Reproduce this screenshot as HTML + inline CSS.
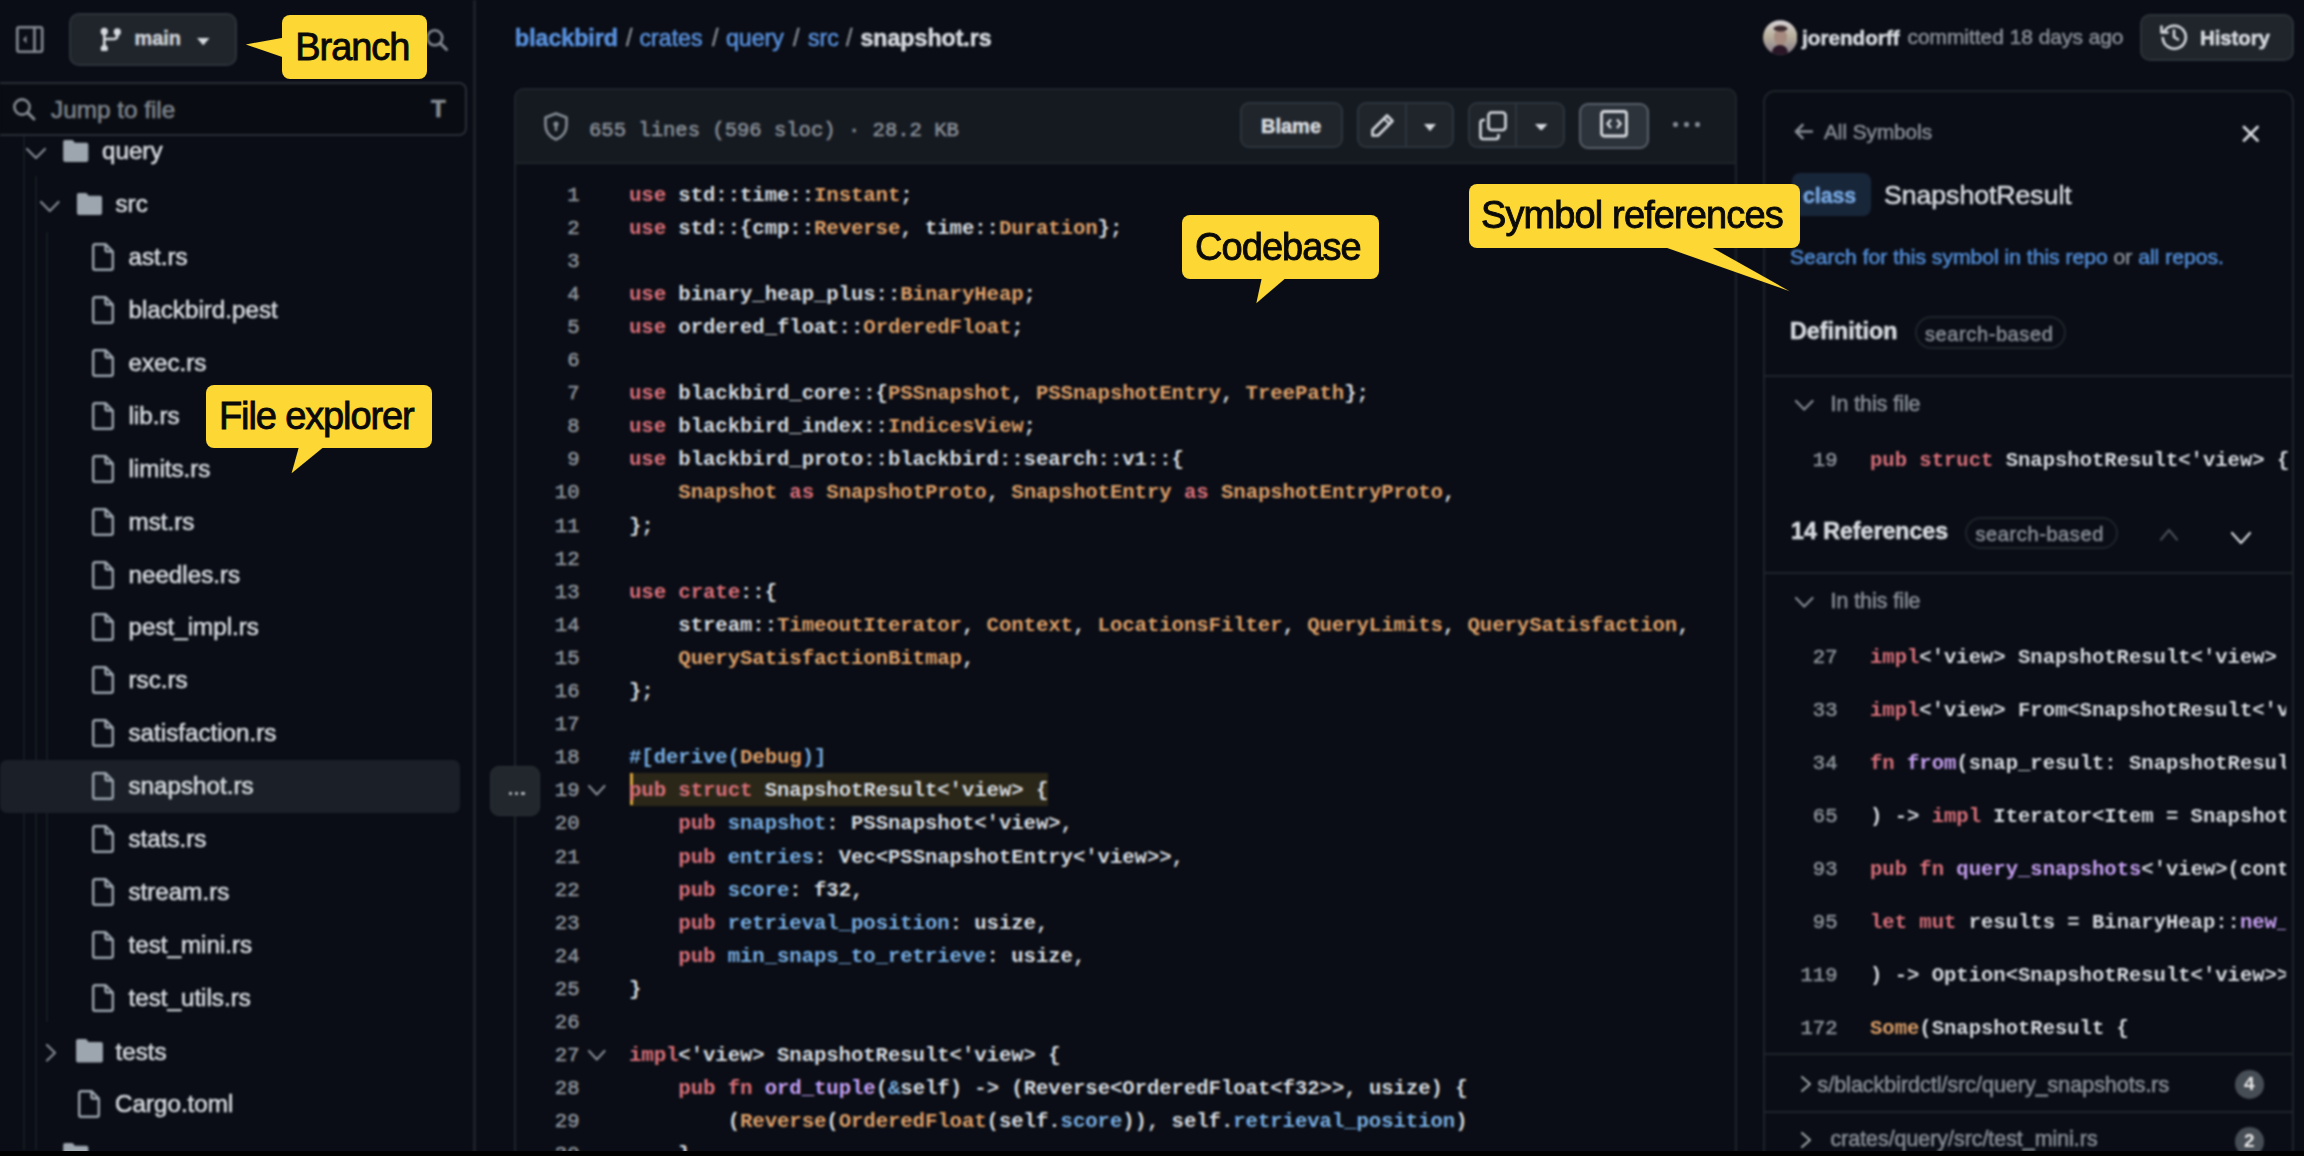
<!DOCTYPE html><html><head><meta charset="utf-8"><style>
html,body{margin:0;padding:0;width:2304px;height:1156px;overflow:hidden;background:#0a0d15;}
.t{position:absolute;white-space:pre;-webkit-text-stroke:0.6px currentColor;}
.m{font-weight:700 !important;-webkit-text-stroke:0 !important;}
.c{-webkit-text-stroke:0.9px #0a0a0a !important;}
.b{position:absolute;}
</style></head><body><div style="position:absolute;left:0;top:0;width:2304px;height:1156px;overflow:hidden;filter:blur(1.2px)">
<div class="b" style="left:473.0px;top:0.0px;width:2.5px;height:1156.0px;background:#1d2128;border-radius:0px;box-sizing:border-box;"></div>
<svg class="b" style="left:16.0px;top:26.0px;" width="27.5" height="27.0" viewBox="0 0 27.5 27"><rect x="1.3" y="1.3" width="24.9" height="24.4" rx="2" fill="none" stroke="#868c94" stroke-width="2.6"/><path d="M18.5 1.5 V25.5" stroke="#868c94" stroke-width="2.6"/><path d="M10.5 9.5 L7 13.5 L10.5 17.5 Z" fill="#868c94"/></svg>
<div class="b" style="left:69.4px;top:13.0px;width:167.6px;height:53.0px;background:#20252c;border:2px solid #2e343b;border-radius:10px;box-sizing:border-box;"></div>
<svg class="b" style="left:100.0px;top:26.6px;" width="22.0" height="24.4" viewBox="0 0 22 24.4"><circle cx="4.3" cy="4.4" r="3.6" fill="#d6dadf"/><circle cx="4.3" cy="21.6" r="3.6" fill="#d6dadf"/><circle cx="17.3" cy="4.9" r="3.6" fill="#d6dadf"/><path d="M4.3 4.4 V21.6 M17.3 4.9 V8.5 Q17.3 12 13.8 12 H4.3" fill="none" stroke="#d6dadf" stroke-width="2.6"/></svg>
<div class="t " style="left:134.5px;top:29.2px;font-size:19.9px;line-height:19.9px;color:#c9cdd2;font-weight:700;font-family:'Liberation Sans', sans-serif;">main</div>
<svg class="b" style="left:197.0px;top:37.6px;" width="12.5" height="7.4" viewBox="0 0 12.5 7.399999999999999"><path d="M0 0 H12.5 L6.25 7.399999999999999 Z" fill="#d6dadf"/></svg>
<svg class="b" style="left:424.5px;top:27.5px;overflow:visible" width="23.5" height="23.5" viewBox="0 0 24 24"><circle cx="10" cy="10" r="7.6" fill="none" stroke="#868c94" stroke-width="2.6"/><path d="M15.6 15.6 L22 22" stroke="#868c94" stroke-width="3.0" stroke-linecap="round"/></svg>
<div class="b" style="left:-10.0px;top:81.5px;width:477.0px;height:54.0px;background:#090c12;border:2.5px solid #292e36;border-radius:8px;box-sizing:border-box;"></div>
<svg class="b" style="left:12.0px;top:97.0px;overflow:visible" width="24.0" height="24.0" viewBox="0 0 24 24"><circle cx="10" cy="10" r="7.6" fill="none" stroke="#868c94" stroke-width="2.6"/><path d="M15.6 15.6 L22 22" stroke="#868c94" stroke-width="3.0" stroke-linecap="round"/></svg>
<div class="t " style="left:51.0px;top:98.4px;font-size:24.3px;line-height:24.3px;color:#7d838b;font-weight:400;font-family:'Liberation Sans', sans-serif;">Jump to file</div>
<div class="t " style="left:431.0px;top:97.2px;font-size:24px;line-height:24px;color:#868c94;font-weight:700;font-family:'Liberation Sans', sans-serif;">T</div>
<div class="b" style="left:22.5px;top:136.0px;width:2.0px;height:1014.0px;background:#161b22;border-radius:0px;box-sizing:border-box;"></div>
<div class="b" style="left:34.5px;top:176.0px;width:2.0px;height:974.0px;background:#161b22;border-radius:0px;box-sizing:border-box;"></div>
<div class="b" style="left:46.0px;top:232.0px;width:2.0px;height:790.0px;background:#161b22;border-radius:0px;box-sizing:border-box;"></div>
<div class="b" style="left:0.0px;top:759.5px;width:460.0px;height:53.5px;background:#1b2028;border-radius:7px;box-sizing:border-box;"></div>
<svg class="b" style="left:25.0px;top:146.5px;" width="22.0" height="13.0" viewBox="-2 -2 22 13.0"><path d="M0 0 L9.0 9.0 L18.0 0" fill="none" stroke="#868c94" stroke-width="2.2" stroke-linecap="round" stroke-linejoin="round"/></svg>
<svg class="b" style="left:62.0px;top:139.5px;overflow:visible" width="27.5" height="22.0" viewBox="0 0 16 14"><path d="M0 1.2 C0 .5 .5 0 1.2 0 H5.6 C6 0 6.3 .2 6.5 .5 L7.4 1.8 H14.8 C15.5 1.8 16 2.3 16 3 V12.8 C16 13.5 15.5 14 14.8 14 H1.2 C.5 14 0 13.5 0 12.8 Z" fill="#9da5ae"/></svg>
<div class="t " style="left:102.0px;top:139.3px;font-size:24.2px;line-height:24.2px;color:#d6dadf;font-weight:400;font-family:'Liberation Sans', sans-serif;">query</div>
<svg class="b" style="left:38.5px;top:199.5px;" width="21.5" height="13.0" viewBox="-2 -2 21.5 13.0"><path d="M0 0 L8.8 9.0 L17.5 0" fill="none" stroke="#868c94" stroke-width="2.2" stroke-linecap="round" stroke-linejoin="round"/></svg>
<svg class="b" style="left:76.0px;top:192.5px;overflow:visible" width="27.0" height="22.0" viewBox="0 0 16 14"><path d="M0 1.2 C0 .5 .5 0 1.2 0 H5.6 C6 0 6.3 .2 6.5 .5 L7.4 1.8 H14.8 C15.5 1.8 16 2.3 16 3 V12.8 C16 13.5 15.5 14 14.8 14 H1.2 C.5 14 0 13.5 0 12.8 Z" fill="#9da5ae"/></svg>
<div class="t " style="left:115.5px;top:192.2px;font-size:24.2px;line-height:24.2px;color:#d6dadf;font-weight:400;font-family:'Liberation Sans', sans-serif;">src</div>
<svg class="b" style="left:92.0px;top:243.1px;overflow:visible" width="22.0" height="28.0" viewBox="0 0 22 28"><path d="M3 1.2 H13.5 L20.8 8.5 V24.8 C20.8 26 19.8 26.8 18.8 26.8 H3 C2 26.8 1.2 26 1.2 24.8 V3.2 C1.2 2 2 1.2 3 1.2 Z M13.5 1.2 V7 C13.5 7.9 13.9 8.5 14.8 8.5 H20.8" fill="none" stroke="#9da5ae" stroke-width="2.4" stroke-linejoin="round"/></svg>
<div class="t " style="left:128.5px;top:245.1px;font-size:24.2px;line-height:24.2px;color:#d6dadf;font-weight:400;font-family:'Liberation Sans', sans-serif;">ast.rs</div>
<svg class="b" style="left:92.0px;top:296.0px;overflow:visible" width="22.0" height="28.0" viewBox="0 0 22 28"><path d="M3 1.2 H13.5 L20.8 8.5 V24.8 C20.8 26 19.8 26.8 18.8 26.8 H3 C2 26.8 1.2 26 1.2 24.8 V3.2 C1.2 2 2 1.2 3 1.2 Z M13.5 1.2 V7 C13.5 7.9 13.9 8.5 14.8 8.5 H20.8" fill="none" stroke="#9da5ae" stroke-width="2.4" stroke-linejoin="round"/></svg>
<div class="t " style="left:128.5px;top:298.0px;font-size:24.2px;line-height:24.2px;color:#d6dadf;font-weight:400;font-family:'Liberation Sans', sans-serif;">blackbird.pest</div>
<svg class="b" style="left:92.0px;top:348.9px;overflow:visible" width="22.0" height="28.0" viewBox="0 0 22 28"><path d="M3 1.2 H13.5 L20.8 8.5 V24.8 C20.8 26 19.8 26.8 18.8 26.8 H3 C2 26.8 1.2 26 1.2 24.8 V3.2 C1.2 2 2 1.2 3 1.2 Z M13.5 1.2 V7 C13.5 7.9 13.9 8.5 14.8 8.5 H20.8" fill="none" stroke="#9da5ae" stroke-width="2.4" stroke-linejoin="round"/></svg>
<div class="t " style="left:128.5px;top:350.9px;font-size:24.2px;line-height:24.2px;color:#d6dadf;font-weight:400;font-family:'Liberation Sans', sans-serif;">exec.rs</div>
<svg class="b" style="left:92.0px;top:401.8px;overflow:visible" width="22.0" height="28.0" viewBox="0 0 22 28"><path d="M3 1.2 H13.5 L20.8 8.5 V24.8 C20.8 26 19.8 26.8 18.8 26.8 H3 C2 26.8 1.2 26 1.2 24.8 V3.2 C1.2 2 2 1.2 3 1.2 Z M13.5 1.2 V7 C13.5 7.9 13.9 8.5 14.8 8.5 H20.8" fill="none" stroke="#9da5ae" stroke-width="2.4" stroke-linejoin="round"/></svg>
<div class="t " style="left:128.5px;top:403.8px;font-size:24.2px;line-height:24.2px;color:#d6dadf;font-weight:400;font-family:'Liberation Sans', sans-serif;">lib.rs</div>
<svg class="b" style="left:92.0px;top:454.7px;overflow:visible" width="22.0" height="28.0" viewBox="0 0 22 28"><path d="M3 1.2 H13.5 L20.8 8.5 V24.8 C20.8 26 19.8 26.8 18.8 26.8 H3 C2 26.8 1.2 26 1.2 24.8 V3.2 C1.2 2 2 1.2 3 1.2 Z M13.5 1.2 V7 C13.5 7.9 13.9 8.5 14.8 8.5 H20.8" fill="none" stroke="#9da5ae" stroke-width="2.4" stroke-linejoin="round"/></svg>
<div class="t " style="left:128.5px;top:456.7px;font-size:24.2px;line-height:24.2px;color:#d6dadf;font-weight:400;font-family:'Liberation Sans', sans-serif;">limits.rs</div>
<svg class="b" style="left:92.0px;top:507.6px;overflow:visible" width="22.0" height="28.0" viewBox="0 0 22 28"><path d="M3 1.2 H13.5 L20.8 8.5 V24.8 C20.8 26 19.8 26.8 18.8 26.8 H3 C2 26.8 1.2 26 1.2 24.8 V3.2 C1.2 2 2 1.2 3 1.2 Z M13.5 1.2 V7 C13.5 7.9 13.9 8.5 14.8 8.5 H20.8" fill="none" stroke="#9da5ae" stroke-width="2.4" stroke-linejoin="round"/></svg>
<div class="t " style="left:128.5px;top:509.6px;font-size:24.2px;line-height:24.2px;color:#d6dadf;font-weight:400;font-family:'Liberation Sans', sans-serif;">mst.rs</div>
<svg class="b" style="left:92.0px;top:560.5px;overflow:visible" width="22.0" height="28.0" viewBox="0 0 22 28"><path d="M3 1.2 H13.5 L20.8 8.5 V24.8 C20.8 26 19.8 26.8 18.8 26.8 H3 C2 26.8 1.2 26 1.2 24.8 V3.2 C1.2 2 2 1.2 3 1.2 Z M13.5 1.2 V7 C13.5 7.9 13.9 8.5 14.8 8.5 H20.8" fill="none" stroke="#9da5ae" stroke-width="2.4" stroke-linejoin="round"/></svg>
<div class="t " style="left:128.5px;top:562.5px;font-size:24.2px;line-height:24.2px;color:#d6dadf;font-weight:400;font-family:'Liberation Sans', sans-serif;">needles.rs</div>
<svg class="b" style="left:92.0px;top:613.4px;overflow:visible" width="22.0" height="28.0" viewBox="0 0 22 28"><path d="M3 1.2 H13.5 L20.8 8.5 V24.8 C20.8 26 19.8 26.8 18.8 26.8 H3 C2 26.8 1.2 26 1.2 24.8 V3.2 C1.2 2 2 1.2 3 1.2 Z M13.5 1.2 V7 C13.5 7.9 13.9 8.5 14.8 8.5 H20.8" fill="none" stroke="#9da5ae" stroke-width="2.4" stroke-linejoin="round"/></svg>
<div class="t " style="left:128.5px;top:615.4px;font-size:24.2px;line-height:24.2px;color:#d6dadf;font-weight:400;font-family:'Liberation Sans', sans-serif;">pest_impl.rs</div>
<svg class="b" style="left:92.0px;top:666.3px;overflow:visible" width="22.0" height="28.0" viewBox="0 0 22 28"><path d="M3 1.2 H13.5 L20.8 8.5 V24.8 C20.8 26 19.8 26.8 18.8 26.8 H3 C2 26.8 1.2 26 1.2 24.8 V3.2 C1.2 2 2 1.2 3 1.2 Z M13.5 1.2 V7 C13.5 7.9 13.9 8.5 14.8 8.5 H20.8" fill="none" stroke="#9da5ae" stroke-width="2.4" stroke-linejoin="round"/></svg>
<div class="t " style="left:128.5px;top:668.3px;font-size:24.2px;line-height:24.2px;color:#d6dadf;font-weight:400;font-family:'Liberation Sans', sans-serif;">rsc.rs</div>
<svg class="b" style="left:92.0px;top:719.2px;overflow:visible" width="22.0" height="28.0" viewBox="0 0 22 28"><path d="M3 1.2 H13.5 L20.8 8.5 V24.8 C20.8 26 19.8 26.8 18.8 26.8 H3 C2 26.8 1.2 26 1.2 24.8 V3.2 C1.2 2 2 1.2 3 1.2 Z M13.5 1.2 V7 C13.5 7.9 13.9 8.5 14.8 8.5 H20.8" fill="none" stroke="#9da5ae" stroke-width="2.4" stroke-linejoin="round"/></svg>
<div class="t " style="left:128.5px;top:721.2px;font-size:24.2px;line-height:24.2px;color:#d6dadf;font-weight:400;font-family:'Liberation Sans', sans-serif;">satisfaction.rs</div>
<svg class="b" style="left:92.0px;top:772.1px;overflow:visible" width="22.0" height="28.0" viewBox="0 0 22 28"><path d="M3 1.2 H13.5 L20.8 8.5 V24.8 C20.8 26 19.8 26.8 18.8 26.8 H3 C2 26.8 1.2 26 1.2 24.8 V3.2 C1.2 2 2 1.2 3 1.2 Z M13.5 1.2 V7 C13.5 7.9 13.9 8.5 14.8 8.5 H20.8" fill="none" stroke="#9da5ae" stroke-width="2.4" stroke-linejoin="round"/></svg>
<div class="t " style="left:128.5px;top:774.1px;font-size:24.2px;line-height:24.2px;color:#d6dadf;font-weight:400;font-family:'Liberation Sans', sans-serif;">snapshot.rs</div>
<svg class="b" style="left:92.0px;top:825.0px;overflow:visible" width="22.0" height="28.0" viewBox="0 0 22 28"><path d="M3 1.2 H13.5 L20.8 8.5 V24.8 C20.8 26 19.8 26.8 18.8 26.8 H3 C2 26.8 1.2 26 1.2 24.8 V3.2 C1.2 2 2 1.2 3 1.2 Z M13.5 1.2 V7 C13.5 7.9 13.9 8.5 14.8 8.5 H20.8" fill="none" stroke="#9da5ae" stroke-width="2.4" stroke-linejoin="round"/></svg>
<div class="t " style="left:128.5px;top:827.0px;font-size:24.2px;line-height:24.2px;color:#d6dadf;font-weight:400;font-family:'Liberation Sans', sans-serif;">stats.rs</div>
<svg class="b" style="left:92.0px;top:877.9px;overflow:visible" width="22.0" height="28.0" viewBox="0 0 22 28"><path d="M3 1.2 H13.5 L20.8 8.5 V24.8 C20.8 26 19.8 26.8 18.8 26.8 H3 C2 26.8 1.2 26 1.2 24.8 V3.2 C1.2 2 2 1.2 3 1.2 Z M13.5 1.2 V7 C13.5 7.9 13.9 8.5 14.8 8.5 H20.8" fill="none" stroke="#9da5ae" stroke-width="2.4" stroke-linejoin="round"/></svg>
<div class="t " style="left:128.5px;top:879.9px;font-size:24.2px;line-height:24.2px;color:#d6dadf;font-weight:400;font-family:'Liberation Sans', sans-serif;">stream.rs</div>
<svg class="b" style="left:92.0px;top:930.8px;overflow:visible" width="22.0" height="28.0" viewBox="0 0 22 28"><path d="M3 1.2 H13.5 L20.8 8.5 V24.8 C20.8 26 19.8 26.8 18.8 26.8 H3 C2 26.8 1.2 26 1.2 24.8 V3.2 C1.2 2 2 1.2 3 1.2 Z M13.5 1.2 V7 C13.5 7.9 13.9 8.5 14.8 8.5 H20.8" fill="none" stroke="#9da5ae" stroke-width="2.4" stroke-linejoin="round"/></svg>
<div class="t " style="left:128.5px;top:932.8px;font-size:24.2px;line-height:24.2px;color:#d6dadf;font-weight:400;font-family:'Liberation Sans', sans-serif;">test_mini.rs</div>
<svg class="b" style="left:92.0px;top:983.7px;overflow:visible" width="22.0" height="28.0" viewBox="0 0 22 28"><path d="M3 1.2 H13.5 L20.8 8.5 V24.8 C20.8 26 19.8 26.8 18.8 26.8 H3 C2 26.8 1.2 26 1.2 24.8 V3.2 C1.2 2 2 1.2 3 1.2 Z M13.5 1.2 V7 C13.5 7.9 13.9 8.5 14.8 8.5 H20.8" fill="none" stroke="#9da5ae" stroke-width="2.4" stroke-linejoin="round"/></svg>
<div class="t " style="left:128.5px;top:985.7px;font-size:24.2px;line-height:24.2px;color:#d6dadf;font-weight:400;font-family:'Liberation Sans', sans-serif;">test_utils.rs</div>
<svg class="b" style="left:45.0px;top:1042.6px;" width="12.0" height="19.5" viewBox="-2 -2 12 19.5"><path d="M0 0 L8.0 7.8 L0 15.5" fill="none" stroke="#868c94" stroke-width="2.2" stroke-linecap="round" stroke-linejoin="round"/></svg>
<svg class="b" style="left:76.0px;top:1038.6px;overflow:visible" width="27.0" height="23.5" viewBox="0 0 16 14"><path d="M0 1.2 C0 .5 .5 0 1.2 0 H5.6 C6 0 6.3 .2 6.5 .5 L7.4 1.8 H14.8 C15.5 1.8 16 2.3 16 3 V12.8 C16 13.5 15.5 14 14.8 14 H1.2 C.5 14 0 13.5 0 12.8 Z" fill="#9da5ae"/></svg>
<div class="t " style="left:115.5px;top:1039.6px;font-size:24.2px;line-height:24.2px;color:#d6dadf;font-weight:400;font-family:'Liberation Sans', sans-serif;">tests</div>
<svg class="b" style="left:78.0px;top:1089.5px;overflow:visible" width="22.0" height="28.0" viewBox="0 0 22 28"><path d="M3 1.2 H13.5 L20.8 8.5 V24.8 C20.8 26 19.8 26.8 18.8 26.8 H3 C2 26.8 1.2 26 1.2 24.8 V3.2 C1.2 2 2 1.2 3 1.2 Z M13.5 1.2 V7 C13.5 7.9 13.9 8.5 14.8 8.5 H20.8" fill="none" stroke="#9da5ae" stroke-width="2.4" stroke-linejoin="round"/></svg>
<div class="t " style="left:115.0px;top:1091.5px;font-size:24.2px;line-height:24.2px;color:#d6dadf;font-weight:400;font-family:'Liberation Sans', sans-serif;">Cargo.toml</div>
<svg class="b" style="left:62.0px;top:1142.9px;overflow:visible" width="27.5" height="22.0" viewBox="0 0 16 14"><path d="M0 1.2 C0 .5 .5 0 1.2 0 H5.6 C6 0 6.3 .2 6.5 .5 L7.4 1.8 H14.8 C15.5 1.8 16 2.3 16 3 V12.8 C16 13.5 15.5 14 14.8 14 H1.2 C.5 14 0 13.5 0 12.8 Z" fill="#9da5ae"/></svg>
<div class="b" style="left:177.0px;top:1156.9px;width:3.0px;height:3.0px;background:#d6dadf;border-radius:0px;box-sizing:border-box;"></div>
<div class="b" style="left:195.0px;top:1155.9px;width:3.0px;height:4.0px;background:#d6dadf;border-radius:0px;box-sizing:border-box;"></div>
<div class="t " style="left:515.0px;top:27.1px;font-size:23.15px;line-height:23.15px;color:#5890dc;font-weight:700;font-family:'Liberation Sans', sans-serif;">blackbird</div>
<div class="t " style="left:626.0px;top:27.1px;font-size:23.15px;line-height:23.15px;color:#868c94;font-weight:400;font-family:'Liberation Sans', sans-serif;">/</div>
<div class="t " style="left:639.5px;top:27.1px;font-size:23.15px;line-height:23.15px;color:#5890dc;font-weight:400;font-family:'Liberation Sans', sans-serif;">crates</div>
<div class="t " style="left:712.0px;top:27.1px;font-size:23.15px;line-height:23.15px;color:#868c94;font-weight:400;font-family:'Liberation Sans', sans-serif;">/</div>
<div class="t " style="left:726.0px;top:27.1px;font-size:23.15px;line-height:23.15px;color:#5890dc;font-weight:400;font-family:'Liberation Sans', sans-serif;">query</div>
<div class="t " style="left:793.0px;top:27.1px;font-size:23.15px;line-height:23.15px;color:#868c94;font-weight:400;font-family:'Liberation Sans', sans-serif;">/</div>
<div class="t " style="left:808.0px;top:27.1px;font-size:23.15px;line-height:23.15px;color:#5890dc;font-weight:400;font-family:'Liberation Sans', sans-serif;">src</div>
<div class="t " style="left:846.0px;top:27.1px;font-size:23.15px;line-height:23.15px;color:#868c94;font-weight:400;font-family:'Liberation Sans', sans-serif;">/</div>
<div class="t " style="left:860.5px;top:27.1px;font-size:23.15px;line-height:23.15px;color:#d6dadf;font-weight:700;font-family:'Liberation Sans', sans-serif;">snapshot.rs</div>
<svg class="b" style="left:1762.5px;top:20.2px;" width="34.5" height="35.0" viewBox="0 0 34.5 35"><defs><clipPath id="av"><circle cx="17.25" cy="17.5" r="17.2"/></clipPath><linearGradient id="avg" x1="0" y1="0" x2="0" y2="1"><stop offset="0" stop-color="#d8d4da"/><stop offset="0.45" stop-color="#b9b09c"/><stop offset="1" stop-color="#857a8c"/></linearGradient></defs><g clip-path="url(#av)"><rect width="34.5" height="35" fill="url(#avg)"/><ellipse cx="17.5" cy="17" rx="6.5" ry="9" fill="#a68a80"/><ellipse cx="17.5" cy="8.5" rx="7" ry="3" fill="#3b2a2e"/><ellipse cx="17" cy="33" rx="8" ry="8" fill="#2a1626"/></g></svg>
<div class="t " style="left:1802.0px;top:27.5px;font-size:20.7px;line-height:20.7px;color:#d6dadf;font-weight:700;font-family:'Liberation Sans', sans-serif;">jorendorff</div>
<div class="t " style="left:1907.5px;top:27.3px;font-size:20.9px;line-height:20.9px;color:#868c94;font-weight:400;font-family:'Liberation Sans', sans-serif;">committed 18 days ago</div>
<div class="b" style="left:2140.0px;top:14.3px;width:153.7px;height:46.3px;background:#20252c;border:2px solid #2e343b;border-radius:10px;box-sizing:border-box;"></div>
<svg class="b" style="left:2159.7px;top:22.0px;" width="28.0" height="29.0" viewBox="0 0 28 29"><path d="M4.6 9 A11.5 11.5 0 1 1 2.8 16" fill="none" stroke="#d6dadf" stroke-width="2.6" stroke-linecap="round"/><path d="M1.5 4.5 V10.5 H7.5" fill="none" stroke="#d6dadf" stroke-width="2.6" stroke-linecap="round" stroke-linejoin="round"/><path d="M14 8.5 V15 L18 17.5" fill="none" stroke="#d6dadf" stroke-width="2.6" stroke-linecap="round" stroke-linejoin="round"/></svg>
<div class="t " style="left:2200.0px;top:27.5px;font-size:20.3px;line-height:20.3px;color:#d6dadf;font-weight:700;font-family:'Liberation Sans', sans-serif;">History</div>
<div class="b" style="left:514.0px;top:87.5px;width:1223.0px;height:1112.5px;background:#0a0d15;border:2px solid #1f242b;border-radius:10px;box-sizing:border-box;"></div>
<div class="b" style="left:514.0px;top:87.5px;width:1223.0px;height:76.5px;background:#151a21;border:2px solid #1f242b;border-radius:10px;box-sizing:border-box;border-bottom-left-radius:0;border-bottom-right-radius:0;"></div>
<svg class="b" style="left:543.0px;top:112.0px;" width="26.0" height="29.0" viewBox="0 0 26 29"><path d="M13 1.5 L23.5 5.5 V13 C23.5 20 19 25 13 27.5 C7 25 2.5 20 2.5 13 V5.5 Z" fill="none" stroke="#868c94" stroke-width="2.6" stroke-linejoin="round"/><circle cx="13" cy="12" r="2.6" fill="#868c94"/><path d="M13 13 V18" stroke="#868c94" stroke-width="2.6" stroke-linecap="round"/></svg>
<div class="t " style="left:589.0px;top:121.2px;font-size:20.55px;line-height:20.55px;color:#868c94;font-weight:400;font-family:'Liberation Mono', monospace;">655 lines (596 sloc) · 28.2 KB</div>
<div class="b" style="left:1239.8px;top:102.4px;width:103.2px;height:45.8px;background:#20252c;border:2px solid #2e343b;border-radius:9px;box-sizing:border-box;"></div>
<div class="t " style="left:1261.0px;top:115.6px;font-size:20px;line-height:20px;color:#d6dadf;font-weight:700;font-family:'Liberation Sans', sans-serif;">Blame</div>
<div class="b" style="left:1356.5px;top:102.4px;width:97.5px;height:45.8px;background:#20252c;border:2px solid #2e343b;border-radius:9px;box-sizing:border-box;"></div>
<div class="b" style="left:1405.0px;top:104.0px;width:2.0px;height:43.0px;background:#2e343b;border-radius:0px;box-sizing:border-box;"></div>
<svg class="b" style="left:1370.0px;top:113.0px;" width="25.0" height="25.0" viewBox="0 0 25 25"><path d="M17 2.5 L22.5 8 L8 22.5 H2.5 V17 Z" fill="none" stroke="#d6dadf" stroke-width="2.6" stroke-linejoin="round"/><path d="M14 5.5 L19.5 11" stroke="#d6dadf" stroke-width="2.2"/></svg>
<svg class="b" style="left:1423.6px;top:123.8px;" width="12.0" height="7.2" viewBox="0 0 12.0 7.25"><path d="M0 0 H12.0 L6.0 7.25 Z" fill="#d6dadf"/></svg>
<div class="b" style="left:1468.0px;top:102.4px;width:96.6px;height:45.8px;background:#20252c;border:2px solid #2e343b;border-radius:9px;box-sizing:border-box;"></div>
<div class="b" style="left:1515.0px;top:104.0px;width:2.0px;height:43.0px;background:#2e343b;border-radius:0px;box-sizing:border-box;"></div>
<svg class="b" style="left:1478.6px;top:111.0px;" width="28.0" height="30.0" viewBox="0 0 28 30"><rect x="9.5" y="1.5" width="17" height="17.5" rx="3" fill="none" stroke="#d6dadf" stroke-width="2.6"/><path d="M6 9 H4 C2.6 9 1.5 10.1 1.5 11.5 V25.5 C1.5 26.9 2.6 28 4 28 H17 C18.4 28 19.5 26.9 19.5 25.5 V23" fill="none" stroke="#d6dadf" stroke-width="2.6"/></svg>
<svg class="b" style="left:1534.6px;top:123.6px;" width="12.4" height="6.9" viewBox="0 0 12.400000000000091 6.900000000000006"><path d="M0 0 H12.400000000000091 L6.2000000000000455 6.900000000000006 Z" fill="#d6dadf"/></svg>
<div class="b" style="left:1579.0px;top:102.8px;width:69.6px;height:46.2px;background:#2d333b;border:2px solid #5a6069;border-radius:9px;box-sizing:border-box;"></div>
<svg class="b" style="left:1599.7px;top:110.0px;" width="28.0" height="27.5" viewBox="0 0 28 27.5"><rect x="1.5" y="1.5" width="25" height="24.5" rx="2.5" fill="none" stroke="#d6dadf" stroke-width="2.8"/><path d="M11 9.5 L7.5 13.75 L11 18 M17 9.5 L20.5 13.75 L17 18" fill="none" stroke="#d6dadf" stroke-width="2.4"/></svg>
<div class="b" style="left:1673.0px;top:122.0px;width:4.5px;height:4.5px;background:#868c94;border-radius:2px;box-sizing:border-box;"></div>
<div class="b" style="left:1684.0px;top:122.0px;width:4.5px;height:4.5px;background:#868c94;border-radius:2px;box-sizing:border-box;"></div>
<div class="b" style="left:1695.0px;top:122.0px;width:4.5px;height:4.5px;background:#868c94;border-radius:2px;box-sizing:border-box;"></div>
<div class="b" style="left:629.7px;top:772.5px;width:418.3px;height:33.5px;background:#2b2718;border-radius:0px;box-sizing:border-box;"></div>
<div class="b" style="left:629.5px;top:773.0px;width:3.0px;height:32.0px;background:#d9a43a;border-radius:0px;box-sizing:border-box;"></div>
<div class="b" style="left:489.8px;top:766.0px;width:50.7px;height:50.2px;background:#22272e;border:1.5px solid #2c3138;border-radius:9px;box-sizing:border-box;"></div>
<div class="b" style="left:508.5px;top:791.5px;width:3.6px;height:3.5px;background:#b4b9bf;border-radius:1px;box-sizing:border-box;"></div>
<div class="b" style="left:514.8px;top:791.5px;width:3.6px;height:3.5px;background:#b4b9bf;border-radius:1px;box-sizing:border-box;"></div>
<div class="b" style="left:521.1px;top:791.5px;width:3.6px;height:3.5px;background:#b4b9bf;border-radius:1px;box-sizing:border-box;"></div>
<div class="t" style="right:1724.5px;top:185.5px;font-size:20.55px;line-height:20.55px;color:#8a9097;font-weight:400;font-family:'Liberation Mono', monospace;text-align:right">1</div>
<div class="t m" style="left:629.0px;top:185.5px;font-size:20.55px;line-height:20.55px;color:#d6dadf;font-weight:400;font-family:'Liberation Mono', monospace;"><span style="color:#d9707a">use</span><span style="color:#d6dadf"> std::time::</span><span style="color:#dc9f68">Instant</span><span style="color:#d6dadf">;</span></div>
<div class="t" style="right:1724.5px;top:218.6px;font-size:20.55px;line-height:20.55px;color:#8a9097;font-weight:400;font-family:'Liberation Mono', monospace;text-align:right">2</div>
<div class="t m" style="left:629.0px;top:218.6px;font-size:20.55px;line-height:20.55px;color:#d6dadf;font-weight:400;font-family:'Liberation Mono', monospace;"><span style="color:#d9707a">use</span><span style="color:#d6dadf"> std::{cmp::</span><span style="color:#dc9f68">Reverse</span><span style="color:#d6dadf">, time::</span><span style="color:#dc9f68">Duration</span><span style="color:#d6dadf">};</span></div>
<div class="t" style="right:1724.5px;top:251.7px;font-size:20.55px;line-height:20.55px;color:#8a9097;font-weight:400;font-family:'Liberation Mono', monospace;text-align:right">3</div>
<div class="t" style="right:1724.5px;top:284.8px;font-size:20.55px;line-height:20.55px;color:#8a9097;font-weight:400;font-family:'Liberation Mono', monospace;text-align:right">4</div>
<div class="t m" style="left:629.0px;top:284.8px;font-size:20.55px;line-height:20.55px;color:#d6dadf;font-weight:400;font-family:'Liberation Mono', monospace;"><span style="color:#d9707a">use</span><span style="color:#d6dadf"> binary_heap_plus::</span><span style="color:#dc9f68">BinaryHeap</span><span style="color:#d6dadf">;</span></div>
<div class="t" style="right:1724.5px;top:317.9px;font-size:20.55px;line-height:20.55px;color:#8a9097;font-weight:400;font-family:'Liberation Mono', monospace;text-align:right">5</div>
<div class="t m" style="left:629.0px;top:317.9px;font-size:20.55px;line-height:20.55px;color:#d6dadf;font-weight:400;font-family:'Liberation Mono', monospace;"><span style="color:#d9707a">use</span><span style="color:#d6dadf"> ordered_float::</span><span style="color:#dc9f68">OrderedFloat</span><span style="color:#d6dadf">;</span></div>
<div class="t" style="right:1724.5px;top:351.0px;font-size:20.55px;line-height:20.55px;color:#8a9097;font-weight:400;font-family:'Liberation Mono', monospace;text-align:right">6</div>
<div class="t" style="right:1724.5px;top:384.1px;font-size:20.55px;line-height:20.55px;color:#8a9097;font-weight:400;font-family:'Liberation Mono', monospace;text-align:right">7</div>
<div class="t m" style="left:629.0px;top:384.1px;font-size:20.55px;line-height:20.55px;color:#d6dadf;font-weight:400;font-family:'Liberation Mono', monospace;"><span style="color:#d9707a">use</span><span style="color:#d6dadf"> blackbird_core::{</span><span style="color:#dc9f68">PSSnapshot</span><span style="color:#d6dadf">, </span><span style="color:#dc9f68">PSSnapshotEntry</span><span style="color:#d6dadf">, </span><span style="color:#dc9f68">TreePath</span><span style="color:#d6dadf">};</span></div>
<div class="t" style="right:1724.5px;top:417.2px;font-size:20.55px;line-height:20.55px;color:#8a9097;font-weight:400;font-family:'Liberation Mono', monospace;text-align:right">8</div>
<div class="t m" style="left:629.0px;top:417.2px;font-size:20.55px;line-height:20.55px;color:#d6dadf;font-weight:400;font-family:'Liberation Mono', monospace;"><span style="color:#d9707a">use</span><span style="color:#d6dadf"> blackbird_index::</span><span style="color:#dc9f68">IndicesView</span><span style="color:#d6dadf">;</span></div>
<div class="t" style="right:1724.5px;top:450.3px;font-size:20.55px;line-height:20.55px;color:#8a9097;font-weight:400;font-family:'Liberation Mono', monospace;text-align:right">9</div>
<div class="t m" style="left:629.0px;top:450.3px;font-size:20.55px;line-height:20.55px;color:#d6dadf;font-weight:400;font-family:'Liberation Mono', monospace;"><span style="color:#d9707a">use</span><span style="color:#d6dadf"> blackbird_proto::blackbird::search::v1::{</span></div>
<div class="t" style="right:1724.5px;top:483.4px;font-size:20.55px;line-height:20.55px;color:#8a9097;font-weight:400;font-family:'Liberation Mono', monospace;text-align:right">10</div>
<div class="t m" style="left:629.0px;top:483.4px;font-size:20.55px;line-height:20.55px;color:#d6dadf;font-weight:400;font-family:'Liberation Mono', monospace;"><span style="color:#d6dadf">    </span><span style="color:#dc9f68">Snapshot</span><span style="color:#d6dadf"> </span><span style="color:#d9707a">as</span><span style="color:#d6dadf"> </span><span style="color:#dc9f68">SnapshotProto</span><span style="color:#d6dadf">, </span><span style="color:#dc9f68">SnapshotEntry</span><span style="color:#d6dadf"> </span><span style="color:#d9707a">as</span><span style="color:#d6dadf"> </span><span style="color:#dc9f68">SnapshotEntryProto</span><span style="color:#d6dadf">,</span></div>
<div class="t" style="right:1724.5px;top:516.5px;font-size:20.55px;line-height:20.55px;color:#8a9097;font-weight:400;font-family:'Liberation Mono', monospace;text-align:right">11</div>
<div class="t m" style="left:629.0px;top:516.5px;font-size:20.55px;line-height:20.55px;color:#d6dadf;font-weight:400;font-family:'Liberation Mono', monospace;"><span style="color:#d6dadf">};</span></div>
<div class="t" style="right:1724.5px;top:549.6px;font-size:20.55px;line-height:20.55px;color:#8a9097;font-weight:400;font-family:'Liberation Mono', monospace;text-align:right">12</div>
<div class="t" style="right:1724.5px;top:582.7px;font-size:20.55px;line-height:20.55px;color:#8a9097;font-weight:400;font-family:'Liberation Mono', monospace;text-align:right">13</div>
<div class="t m" style="left:629.0px;top:582.7px;font-size:20.55px;line-height:20.55px;color:#d6dadf;font-weight:400;font-family:'Liberation Mono', monospace;"><span style="color:#d9707a">use</span><span style="color:#d6dadf"> </span><span style="color:#d9707a">crate</span><span style="color:#d6dadf">::{</span></div>
<div class="t" style="right:1724.5px;top:615.8px;font-size:20.55px;line-height:20.55px;color:#8a9097;font-weight:400;font-family:'Liberation Mono', monospace;text-align:right">14</div>
<div class="t m" style="left:629.0px;top:615.8px;font-size:20.55px;line-height:20.55px;color:#d6dadf;font-weight:400;font-family:'Liberation Mono', monospace;"><span style="color:#d6dadf">    stream::</span><span style="color:#dc9f68">TimeoutIterator</span><span style="color:#d6dadf">, </span><span style="color:#dc9f68">Context</span><span style="color:#d6dadf">, </span><span style="color:#dc9f68">LocationsFilter</span><span style="color:#d6dadf">, </span><span style="color:#dc9f68">QueryLimits</span><span style="color:#d6dadf">, </span><span style="color:#dc9f68">QuerySatisfaction</span><span style="color:#d6dadf">,</span></div>
<div class="t" style="right:1724.5px;top:648.9px;font-size:20.55px;line-height:20.55px;color:#8a9097;font-weight:400;font-family:'Liberation Mono', monospace;text-align:right">15</div>
<div class="t m" style="left:629.0px;top:648.9px;font-size:20.55px;line-height:20.55px;color:#d6dadf;font-weight:400;font-family:'Liberation Mono', monospace;"><span style="color:#d6dadf">    </span><span style="color:#dc9f68">QuerySatisfactionBitmap</span><span style="color:#d6dadf">,</span></div>
<div class="t" style="right:1724.5px;top:682.0px;font-size:20.55px;line-height:20.55px;color:#8a9097;font-weight:400;font-family:'Liberation Mono', monospace;text-align:right">16</div>
<div class="t m" style="left:629.0px;top:682.0px;font-size:20.55px;line-height:20.55px;color:#d6dadf;font-weight:400;font-family:'Liberation Mono', monospace;"><span style="color:#d6dadf">};</span></div>
<div class="t" style="right:1724.5px;top:715.1px;font-size:20.55px;line-height:20.55px;color:#8a9097;font-weight:400;font-family:'Liberation Mono', monospace;text-align:right">17</div>
<div class="t" style="right:1724.5px;top:748.2px;font-size:20.55px;line-height:20.55px;color:#8a9097;font-weight:400;font-family:'Liberation Mono', monospace;text-align:right">18</div>
<div class="t m" style="left:629.0px;top:748.2px;font-size:20.55px;line-height:20.55px;color:#d6dadf;font-weight:400;font-family:'Liberation Mono', monospace;"><span style="color:#78acdf">#[derive(</span><span style="color:#dc9f68">Debug</span><span style="color:#78acdf">)]</span></div>
<div class="t" style="right:1724.5px;top:781.3px;font-size:20.55px;line-height:20.55px;color:#8a9097;font-weight:400;font-family:'Liberation Mono', monospace;text-align:right">19</div>
<div class="t m" style="left:629.0px;top:781.3px;font-size:20.55px;line-height:20.55px;color:#d6dadf;font-weight:400;font-family:'Liberation Mono', monospace;"><span style="color:#d9707a">pub</span><span style="color:#d6dadf"> </span><span style="color:#d9707a">struct</span><span style="color:#d6dadf"> SnapshotResult&lt;&#x27;view&gt; {</span></div>
<div class="t" style="right:1724.5px;top:814.4px;font-size:20.55px;line-height:20.55px;color:#8a9097;font-weight:400;font-family:'Liberation Mono', monospace;text-align:right">20</div>
<div class="t m" style="left:629.0px;top:814.4px;font-size:20.55px;line-height:20.55px;color:#d6dadf;font-weight:400;font-family:'Liberation Mono', monospace;"><span style="color:#d6dadf">    </span><span style="color:#d9707a">pub</span><span style="color:#d6dadf"> </span><span style="color:#78acdf">snapshot</span><span style="color:#d6dadf">: PSSnapshot&lt;&#x27;view&gt;,</span></div>
<div class="t" style="right:1724.5px;top:847.5px;font-size:20.55px;line-height:20.55px;color:#8a9097;font-weight:400;font-family:'Liberation Mono', monospace;text-align:right">21</div>
<div class="t m" style="left:629.0px;top:847.5px;font-size:20.55px;line-height:20.55px;color:#d6dadf;font-weight:400;font-family:'Liberation Mono', monospace;"><span style="color:#d6dadf">    </span><span style="color:#d9707a">pub</span><span style="color:#d6dadf"> </span><span style="color:#78acdf">entries</span><span style="color:#d6dadf">: Vec&lt;PSSnapshotEntry&lt;&#x27;view&gt;&gt;,</span></div>
<div class="t" style="right:1724.5px;top:880.6px;font-size:20.55px;line-height:20.55px;color:#8a9097;font-weight:400;font-family:'Liberation Mono', monospace;text-align:right">22</div>
<div class="t m" style="left:629.0px;top:880.6px;font-size:20.55px;line-height:20.55px;color:#d6dadf;font-weight:400;font-family:'Liberation Mono', monospace;"><span style="color:#d6dadf">    </span><span style="color:#d9707a">pub</span><span style="color:#d6dadf"> </span><span style="color:#78acdf">score</span><span style="color:#d6dadf">: f32,</span></div>
<div class="t" style="right:1724.5px;top:913.7px;font-size:20.55px;line-height:20.55px;color:#8a9097;font-weight:400;font-family:'Liberation Mono', monospace;text-align:right">23</div>
<div class="t m" style="left:629.0px;top:913.7px;font-size:20.55px;line-height:20.55px;color:#d6dadf;font-weight:400;font-family:'Liberation Mono', monospace;"><span style="color:#d6dadf">    </span><span style="color:#d9707a">pub</span><span style="color:#d6dadf"> </span><span style="color:#78acdf">retrieval_position</span><span style="color:#d6dadf">: usize,</span></div>
<div class="t" style="right:1724.5px;top:946.8px;font-size:20.55px;line-height:20.55px;color:#8a9097;font-weight:400;font-family:'Liberation Mono', monospace;text-align:right">24</div>
<div class="t m" style="left:629.0px;top:946.8px;font-size:20.55px;line-height:20.55px;color:#d6dadf;font-weight:400;font-family:'Liberation Mono', monospace;"><span style="color:#d6dadf">    </span><span style="color:#d9707a">pub</span><span style="color:#d6dadf"> </span><span style="color:#78acdf">min_snaps_to_retrieve</span><span style="color:#d6dadf">: usize,</span></div>
<div class="t" style="right:1724.5px;top:979.9px;font-size:20.55px;line-height:20.55px;color:#8a9097;font-weight:400;font-family:'Liberation Mono', monospace;text-align:right">25</div>
<div class="t m" style="left:629.0px;top:979.9px;font-size:20.55px;line-height:20.55px;color:#d6dadf;font-weight:400;font-family:'Liberation Mono', monospace;"><span style="color:#d6dadf">}</span></div>
<div class="t" style="right:1724.5px;top:1013.0px;font-size:20.55px;line-height:20.55px;color:#8a9097;font-weight:400;font-family:'Liberation Mono', monospace;text-align:right">26</div>
<div class="t" style="right:1724.5px;top:1046.1px;font-size:20.55px;line-height:20.55px;color:#8a9097;font-weight:400;font-family:'Liberation Mono', monospace;text-align:right">27</div>
<div class="t m" style="left:629.0px;top:1046.1px;font-size:20.55px;line-height:20.55px;color:#d6dadf;font-weight:400;font-family:'Liberation Mono', monospace;"><span style="color:#d9707a">impl</span><span style="color:#d6dadf">&lt;&#x27;view&gt; SnapshotResult&lt;&#x27;view&gt; {</span></div>
<div class="t" style="right:1724.5px;top:1079.2px;font-size:20.55px;line-height:20.55px;color:#8a9097;font-weight:400;font-family:'Liberation Mono', monospace;text-align:right">28</div>
<div class="t m" style="left:629.0px;top:1079.2px;font-size:20.55px;line-height:20.55px;color:#d6dadf;font-weight:400;font-family:'Liberation Mono', monospace;"><span style="color:#d6dadf">    </span><span style="color:#d9707a">pub</span><span style="color:#d6dadf"> </span><span style="color:#d9707a">fn</span><span style="color:#d6dadf"> </span><span style="color:#c7a0f2">ord_tuple</span><span style="color:#d6dadf">(</span><span style="color:#78acdf">&amp;</span><span style="color:#d6dadf">self) -&gt; (Reverse&lt;OrderedFloat&lt;f32&gt;&gt;, usize) {</span></div>
<div class="t" style="right:1724.5px;top:1112.3px;font-size:20.55px;line-height:20.55px;color:#8a9097;font-weight:400;font-family:'Liberation Mono', monospace;text-align:right">29</div>
<div class="t m" style="left:629.0px;top:1112.3px;font-size:20.55px;line-height:20.55px;color:#d6dadf;font-weight:400;font-family:'Liberation Mono', monospace;"><span style="color:#d6dadf">        (</span><span style="color:#dc9f68">Reverse</span><span style="color:#d6dadf">(</span><span style="color:#dc9f68">OrderedFloat</span><span style="color:#d6dadf">(self.</span><span style="color:#78acdf">score</span><span style="color:#d6dadf">)), self.</span><span style="color:#78acdf">retrieval_position</span><span style="color:#d6dadf">)</span></div>
<div class="t" style="right:1724.5px;top:1145.4px;font-size:20.55px;line-height:20.55px;color:#8a9097;font-weight:400;font-family:'Liberation Mono', monospace;text-align:right">30</div>
<div class="t m" style="left:629.0px;top:1145.4px;font-size:20.55px;line-height:20.55px;color:#d6dadf;font-weight:400;font-family:'Liberation Mono', monospace;"><span style="color:#d6dadf">    }</span></div>
<svg class="b" style="left:587.0px;top:784.1px;" width="19.5" height="12.5" viewBox="-2 -2 19.5 12.5"><path d="M0 0 L7.8 8.5 L15.5 0" fill="none" stroke="#868c94" stroke-width="2.2" stroke-linecap="round" stroke-linejoin="round"/></svg>
<svg class="b" style="left:587.0px;top:1048.9px;" width="19.5" height="12.5" viewBox="-2 -2 19.5 12.5"><path d="M0 0 L7.8 8.5 L15.5 0" fill="none" stroke="#868c94" stroke-width="2.2" stroke-linecap="round" stroke-linejoin="round"/></svg>
<div class="b" style="left:1763.0px;top:90.4px;width:531.0px;height:1159.6px;background:#0a0d15;border:2px solid #1f242b;border-radius:12px;box-sizing:border-box;"></div>
<svg class="b" style="left:1793.5px;top:123.0px;" width="19.5" height="17.0" viewBox="0 0 19.5 17"><path d="M18 8.5 H2.5 M8.5 2 L2 8.5 L8.5 15" fill="none" stroke="#868c94" stroke-width="2.6" stroke-linecap="round" stroke-linejoin="round"/></svg>
<div class="t " style="left:1824.0px;top:121.5px;font-size:20.7px;line-height:20.7px;color:#868c94;font-weight:400;font-family:'Liberation Sans', sans-serif;">All Symbols</div>
<svg class="b" style="left:2242.0px;top:124.5px;" width="17.5" height="17.5" viewBox="0 0 17.5 17.5"><path d="M2 2 L15.5 15.5 M15.5 2 L2 15.5" stroke="#d6dadf" stroke-width="2.8" stroke-linecap="round"/></svg>
<div class="b" style="left:1792.0px;top:173.0px;width:78.5px;height:43.0px;background:#18263a;border-radius:8px;box-sizing:border-box;"></div>
<div class="t " style="left:1803.0px;top:184.9px;font-size:21.2px;line-height:21.2px;color:#74a4dc;font-weight:700;font-family:'Liberation Sans', sans-serif;">class</div>
<div class="t " style="left:1884.0px;top:181.5px;font-size:26.6px;line-height:26.6px;color:#d6dadf;font-weight:400;font-family:'Liberation Sans', sans-serif;">SnapshotResult</div>
<div class="t" style="left:1790px;top:246.4px;font-size:21.1px;line-height:21.1px;font-family:'Liberation Sans', sans-serif;color:#508ad2">Search for this symbol in this repo <span style="color:#868c94">or</span> all repos.</div>
<div class="t " style="left:1790.0px;top:319.6px;font-size:23.3px;line-height:23.3px;color:#d6dadf;font-weight:700;font-family:'Liberation Sans', sans-serif;">Definition</div>
<div class="b" style="left:1914.8px;top:316.0px;width:151.2px;height:32.8px;background:transparent;border:2px solid #1f242b;border-radius:17px;box-sizing:border-box;"></div>
<div class="t " style="left:1925.0px;top:323.6px;font-size:20px;line-height:20px;color:#868c94;font-weight:400;font-family:'Liberation Sans', sans-serif;letter-spacing:0.6px;">search-based</div>
<div class="b" style="left:1764.0px;top:374.6px;width:529.0px;height:2.0px;background:#1f242b;border-radius:0px;box-sizing:border-box;"></div>
<svg class="b" style="left:1794.0px;top:398.5px;" width="20.5" height="12.5" viewBox="-2 -2 20.5 12.5"><path d="M0 0 L8.2 8.5 L16.5 0" fill="none" stroke="#868c94" stroke-width="2.2" stroke-linecap="round" stroke-linejoin="round"/></svg>
<div class="t " style="left:1830.5px;top:394.0px;font-size:21.3px;line-height:21.3px;color:#868c94;font-weight:400;font-family:'Liberation Sans', sans-serif;">In this file</div>
<div class="t" style="right:466.5px;top:450.7px;font-size:20.55px;line-height:20.55px;color:#8a9097;font-weight:400;font-family:'Liberation Mono', monospace;text-align:right">19</div>
<div class="t m" style="left:1870.0px;top:450.7px;font-size:20.55px;line-height:20.55px;color:#d6dadf;font-weight:400;font-family:'Liberation Mono', monospace;"><span style="color:#d9707a">pub</span><span style="color:#d6dadf"> </span><span style="color:#d9707a">struct</span><span style="color:#d6dadf"> SnapshotResult&lt;&#x27;view&gt; {</span></div>
<div class="t " style="left:1791.0px;top:520.0px;font-size:23.16px;line-height:23.16px;color:#d6dadf;font-weight:700;font-family:'Liberation Sans', sans-serif;">14 References</div>
<div class="b" style="left:1965.4px;top:517.0px;width:152.3px;height:32.0px;background:transparent;border:2px solid #1f242b;border-radius:17px;box-sizing:border-box;"></div>
<div class="t " style="left:1975.5px;top:524.1px;font-size:20px;line-height:20px;color:#868c94;font-weight:400;font-family:'Liberation Sans', sans-serif;letter-spacing:0.6px;">search-based</div>
<svg class="b" style="left:2159.0px;top:528.0px;" width="20.0" height="13.6" viewBox="-2 -2 20 13.600000000000023"><path d="M0 9.6 L8.0 0 L16.0 9.6" fill="none" stroke="#4a5058" stroke-width="2.2" stroke-linecap="round" stroke-linejoin="round"/></svg>
<svg class="b" style="left:2230.0px;top:531.0px;" width="22.0" height="14.0" viewBox="-2 -2 22 14"><path d="M0 0 L9.0 10.0 L18.0 0" fill="none" stroke="#d6dadf" stroke-width="2.2" stroke-linecap="round" stroke-linejoin="round"/></svg>
<div class="b" style="left:1764.0px;top:572.0px;width:529.0px;height:2.0px;background:#1f242b;border-radius:0px;box-sizing:border-box;"></div>
<svg class="b" style="left:1794.0px;top:595.5px;" width="20.5" height="12.5" viewBox="-2 -2 20.5 12.5"><path d="M0 0 L8.2 8.5 L16.5 0" fill="none" stroke="#868c94" stroke-width="2.2" stroke-linecap="round" stroke-linejoin="round"/></svg>
<div class="t " style="left:1830.5px;top:591.0px;font-size:21.3px;line-height:21.3px;color:#868c94;font-weight:400;font-family:'Liberation Sans', sans-serif;">In this file</div>
<div class="b" style="left:1764px;top:620px;width:522px;height:440px;overflow:hidden">
<div class="t" style="right:448.5px;top:27.7px;font-size:20.55px;line-height:20.55px;font-family:'Liberation Mono', monospace;color:#8a9097">27</div>
<div class="t m" style="left:106px;top:27.7px;font-size:20.55px;line-height:20.55px;font-family:'Liberation Mono', monospace;color:#d6dadf"><span style="color:#d9707a">impl</span><span style="color:#d6dadf">&lt;&#x27;view&gt; SnapshotResult&lt;&#x27;view&gt;</span></div>
<div class="t" style="right:448.5px;top:80.7px;font-size:20.55px;line-height:20.55px;font-family:'Liberation Mono', monospace;color:#8a9097">33</div>
<div class="t m" style="left:106px;top:80.7px;font-size:20.55px;line-height:20.55px;font-family:'Liberation Mono', monospace;color:#d6dadf"><span style="color:#d9707a">impl</span><span style="color:#d6dadf">&lt;&#x27;view&gt; From&lt;SnapshotResult&lt;&#x27;view&gt;&gt; for</span></div>
<div class="t" style="right:448.5px;top:133.7px;font-size:20.55px;line-height:20.55px;font-family:'Liberation Mono', monospace;color:#8a9097">34</div>
<div class="t m" style="left:106px;top:133.7px;font-size:20.55px;line-height:20.55px;font-family:'Liberation Mono', monospace;color:#d6dadf"><span style="color:#d9707a">fn</span><span style="color:#d6dadf"> </span><span style="color:#c7a0f2">from</span><span style="color:#d6dadf">(snap_result: SnapshotResult&lt;</span></div>
<div class="t" style="right:448.5px;top:186.7px;font-size:20.55px;line-height:20.55px;font-family:'Liberation Mono', monospace;color:#8a9097">65</div>
<div class="t m" style="left:106px;top:186.7px;font-size:20.55px;line-height:20.55px;font-family:'Liberation Mono', monospace;color:#d6dadf"><span style="color:#d6dadf">) -&gt; </span><span style="color:#d9707a">impl</span><span style="color:#d6dadf"> Iterator&lt;Item = SnapshotResult</span></div>
<div class="t" style="right:448.5px;top:239.7px;font-size:20.55px;line-height:20.55px;font-family:'Liberation Mono', monospace;color:#8a9097">93</div>
<div class="t m" style="left:106px;top:239.7px;font-size:20.55px;line-height:20.55px;font-family:'Liberation Mono', monospace;color:#d6dadf"><span style="color:#d9707a">pub</span><span style="color:#d6dadf"> </span><span style="color:#d9707a">fn</span><span style="color:#d6dadf"> </span><span style="color:#c7a0f2">query_snapshots</span><span style="color:#d6dadf">&lt;&#x27;view&gt;(context</span></div>
<div class="t" style="right:448.5px;top:292.7px;font-size:20.55px;line-height:20.55px;font-family:'Liberation Mono', monospace;color:#8a9097">95</div>
<div class="t m" style="left:106px;top:292.7px;font-size:20.55px;line-height:20.55px;font-family:'Liberation Mono', monospace;color:#d6dadf"><span style="color:#d9707a">let</span><span style="color:#d6dadf"> </span><span style="color:#d9707a">mut</span><span style="color:#d6dadf"> results = BinaryHeap::</span><span style="color:#c7a0f2">new_by</span></div>
<div class="t" style="right:448.5px;top:345.7px;font-size:20.55px;line-height:20.55px;font-family:'Liberation Mono', monospace;color:#8a9097">119</div>
<div class="t m" style="left:106px;top:345.7px;font-size:20.55px;line-height:20.55px;font-family:'Liberation Mono', monospace;color:#d6dadf"><span style="color:#d6dadf">) -&gt; Option&lt;SnapshotResult&lt;&#x27;view&gt;&gt;</span></div>
<div class="t" style="right:448.5px;top:398.7px;font-size:20.55px;line-height:20.55px;font-family:'Liberation Mono', monospace;color:#8a9097">172</div>
<div class="t m" style="left:106px;top:398.7px;font-size:20.55px;line-height:20.55px;font-family:'Liberation Mono', monospace;color:#d6dadf"><span style="color:#dc9f68">Some</span><span style="color:#d6dadf">(SnapshotResult {</span></div>
</div>
<div class="b" style="left:1764.0px;top:1053.2px;width:529.0px;height:2.0px;background:#1f242b;border-radius:0px;box-sizing:border-box;"></div>
<svg class="b" style="left:1799.5px;top:1074.5px;" width="12.0" height="18.0" viewBox="-2 -2 12.0 18.0"><path d="M0 0 L8.0 7.0 L0 14.0" fill="none" stroke="#a3a8ae" stroke-width="2.0" stroke-linecap="round" stroke-linejoin="round"/></svg>
<div class="t " style="left:1817.5px;top:1074.8px;font-size:21.46px;line-height:21.46px;color:#868c94;font-weight:400;font-family:'Liberation Sans', sans-serif;">s/blackbirdctl/src/query_snapshots.rs</div>
<div class="b" style="left:2234.6px;top:1070px;width:29.4px;height:28.6px;border-radius:50%;background:#474d55;color:#e6e6e6;font:700 19px/28.6px 'Liberation Sans', sans-serif;text-align:center">4</div>
<div class="b" style="left:1764.0px;top:1110.6px;width:529.0px;height:2.0px;background:#1f242b;border-radius:0px;box-sizing:border-box;"></div>
<svg class="b" style="left:1799.5px;top:1131.0px;" width="12.0" height="18.0" viewBox="-2 -2 12.0 18"><path d="M0 0 L8.0 7.0 L0 14.0" fill="none" stroke="#a3a8ae" stroke-width="2.0" stroke-linecap="round" stroke-linejoin="round"/></svg>
<div class="t " style="left:1830.5px;top:1128.9px;font-size:21.36px;line-height:21.36px;color:#868c94;font-weight:400;font-family:'Liberation Sans', sans-serif;">crates/query/src/test_mini.rs</div>
<div class="b" style="left:2234.6px;top:1127px;width:29.4px;height:28.6px;border-radius:50%;background:#474d55;color:#e6e6e6;font:700 19px/28.6px 'Liberation Sans', sans-serif;text-align:center">2</div>
</div>
<div class="b" style="left:0.0px;top:1150.5px;width:2304.0px;height:5.5px;background:#000000;border-radius:0px;box-sizing:border-box;"></div>
<div class="b" style="left:282.0px;top:14.8px;width:145.2px;height:64.0px;background:#fdd733;border-radius:8px;box-sizing:border-box;"></div>
<svg class="b" style="left:0;top:0" width="2304" height="1156"><polygon points="283.0,37.7 245.8,44.4 283.0,57.3" fill="#fdd733"/></svg>
<div class="t c" style="left:295.3px;top:27.5px;font-size:38px;line-height:38px;color:#0a0a0a;font-weight:400;font-family:'Liberation Sans', sans-serif;letter-spacing:-1.06px;">Branch</div>
<div class="b" style="left:205.8px;top:384.7px;width:226.2px;height:63.2px;background:#fdd733;border-radius:8px;box-sizing:border-box;"></div>
<svg class="b" style="left:0;top:0" width="2304" height="1156"><polygon points="298.9,447.0 291.6,473.3 323.7,447.0" fill="#fdd733"/></svg>
<div class="t c" style="left:219.0px;top:397.1px;font-size:38px;line-height:38px;color:#0a0a0a;font-weight:400;font-family:'Liberation Sans', sans-serif;letter-spacing:-1.12px;">File explorer</div>
<div class="b" style="left:1182.0px;top:215.0px;width:196.6px;height:63.8px;background:#fdd733;border-radius:8px;box-sizing:border-box;"></div>
<svg class="b" style="left:0;top:0" width="2304" height="1156"><polygon points="1261.8,278.0 1256.3,303.3 1285.8,278.0" fill="#fdd733"/></svg>
<div class="t c" style="left:1195.0px;top:227.7px;font-size:38px;line-height:38px;color:#0a0a0a;font-weight:400;font-family:'Liberation Sans', sans-serif;letter-spacing:-0.93px;">Codebase</div>
<div class="b" style="left:1468.5px;top:184.1px;width:331.5px;height:63.8px;background:#fdd733;border-radius:8px;box-sizing:border-box;"></div>
<svg class="b" style="left:0;top:0" width="2304" height="1156"><polygon points="1664.4,247.0 1789.6,291.2 1711.0,247.0" fill="#fdd733"/></svg>
<div class="t c" style="left:1481.0px;top:196.4px;font-size:38px;line-height:38px;color:#0a0a0a;font-weight:400;font-family:'Liberation Sans', sans-serif;letter-spacing:-0.88px;">Symbol references</div>
</body></html>
